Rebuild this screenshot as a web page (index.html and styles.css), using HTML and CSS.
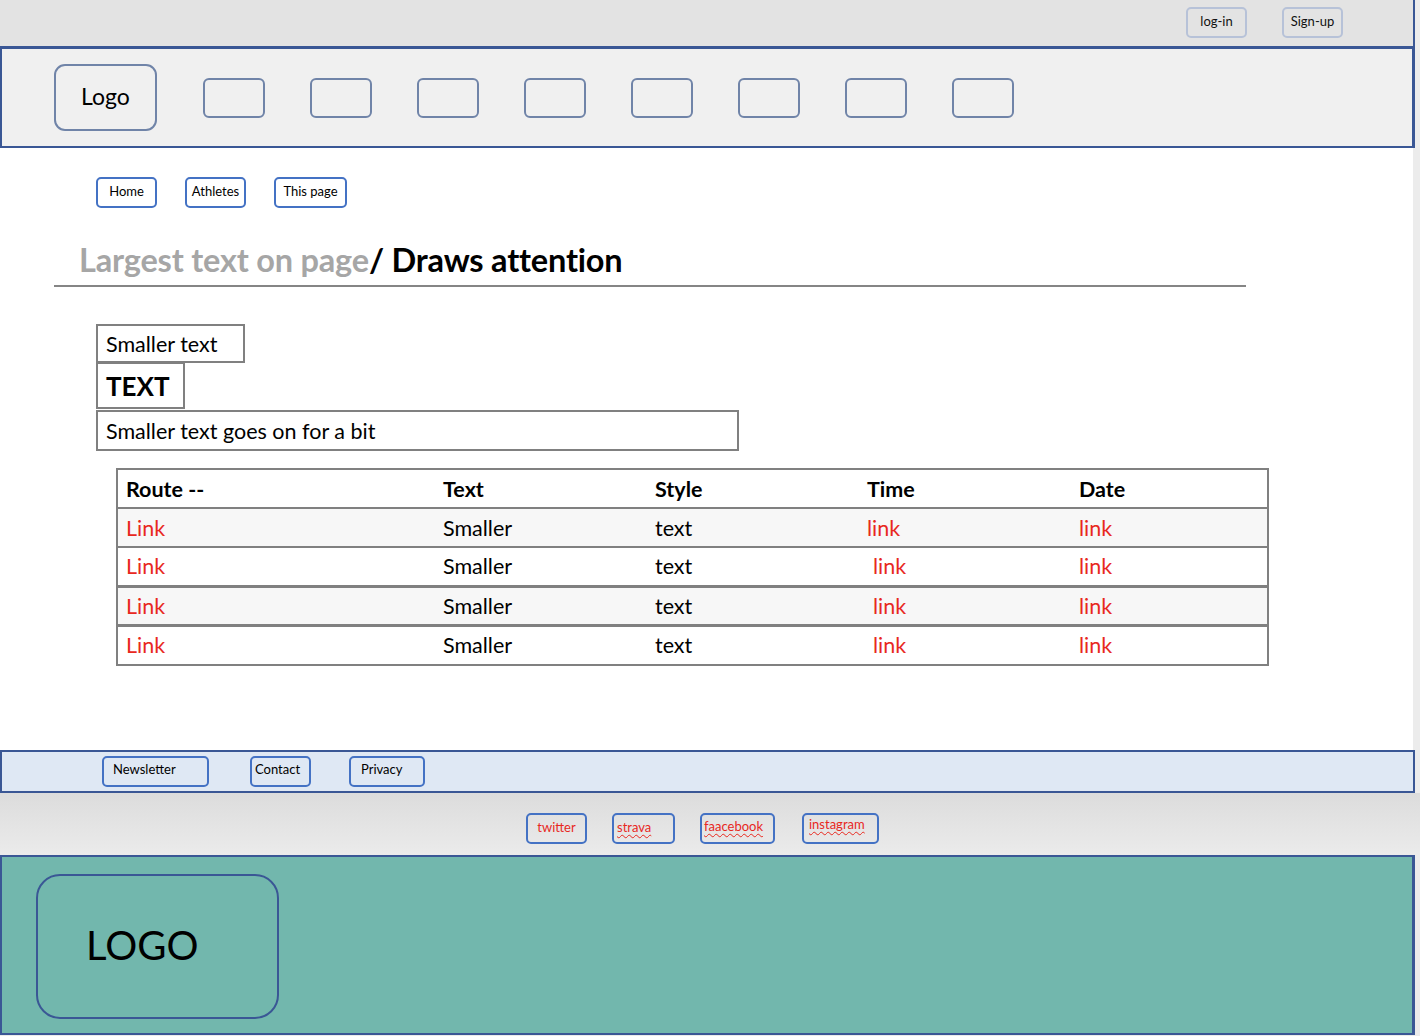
FILE: index.html
```html
<!DOCTYPE html>
<html lang="en">
<head>
<meta charset="utf-8">
<title>Wireframe</title>
<link rel="stylesheet" href="styles.css">
</head>
<body>
<div class="page">
  <header class="topbar">
    <a class="top-btn login">log-in</a>
    <a class="top-btn signup">Sign-up</a>
  </header>
  <nav class="navbar">
    <div class="logo">Logo</div>
    <div class="nav-items">
      <span class="nav-box"></span>
      <span class="nav-box"></span>
      <span class="nav-box"></span>
      <span class="nav-box"></span>
      <span class="nav-box"></span>
      <span class="nav-box"></span>
      <span class="nav-box"></span>
      <span class="nav-box"></span>
    </div>
  </nav>
  <main class="main">
    <div class="crumbs">
      <a class="crumb crumb-home">Home</a>
      <a class="crumb crumb-ath">Athletes</a>
      <a class="crumb crumb-this">This page</a>
    </div>
    <h1 class="title"><span class="title-muted">Largest text on page</span>/ Draws attention</h1>
    <div class="boxes">
      <div class="box box-small">Smaller text</div>
      <div class="box box-big">TEXT</div>
      <div class="box box-long">Smaller text goes on for a bit</div>
    </div>
    <table class="routes">
      <colgroup>
        <col class="c1"><col class="c2"><col class="c3"><col class="c4"><col class="c5">
      </colgroup>
      <thead>
        <tr><th>Route --</th><th>Text</th><th>Style</th><th>Time</th><th>Date</th></tr>
      </thead>
      <tbody>
        <tr class="shade"><td class="red">Link</td><td>Smaller</td><td>text</td><td class="red">link</td><td class="red">link</td></tr>
        <tr class="thick"><td class="red">Link</td><td>Smaller</td><td>text</td><td class="red shift">link</td><td class="red">link</td></tr>
        <tr class="shade thick"><td class="red">Link</td><td>Smaller</td><td>text</td><td class="red shift">link</td><td class="red">link</td></tr>
        <tr><td class="red">Link</td><td>Smaller</td><td>text</td><td class="red shift">link</td><td class="red">link</td></tr>
      </tbody>
    </table>
  </main>
  <footer class="footbar">
    <a class="foot-btn fb-news">Newsletter</a>
    <a class="foot-btn fb-contact">Contact</a>
    <a class="foot-btn fb-privacy">Privacy</a>
  </footer>
</div>
<div class="social">
  <a class="soc soc-tw">twitter</a>
  <a class="soc soc-st"><span class="wavy">strava</span></a>
  <a class="soc soc-fb"><span class="wavy">faacebook</span></a>
  <a class="soc soc-ig"><span class="wavy">instagram</span></a>
</div>
<div class="page">
  <section class="bottom">
    <div class="big-logo">LOGO</div>
  </section>
</div>
</body>
</html>
```

FILE: styles.css
```css
* { box-sizing: border-box; }

html, body {
  margin: 0;
  padding: 0;
}

body {
  font-family: Lato, "Open Sans", "Liberation Sans", sans-serif;
  color: #000;
  background: linear-gradient(to bottom, #ececec 0, #ececec 793px, #dcdcdc 793px, #ebebeb 855px, #ebebeb 100%);
  width: 1420px;
  height: 1036px;
  overflow: hidden;
}

.page {
  width: 1415px;
}

/* top bar */
.topbar {
  height: 49px;
  background: #e3e3e3;
  border-bottom: 3px solid #3a5795;
  border-right: 2px solid #3a5795;
  display: flex;
  align-items: flex-start;
  padding: 7px 0 0 1186px;
  gap: 35px;
}

.top-btn {
  display: flex;
  align-items: center;
  justify-content: center;
  width: 61px;
  height: 31px;
  border: 2px solid #b7c2d8;
  border-radius: 5px;
  font-size: 13px;
  padding-bottom: 3px;
  color: #111;
}

/* nav */
.navbar {
  height: 99px;
  background: #f0f0f0;
  border-left: 2px solid #3a5795;
  border-right: 3px solid #3a5795;
  border-bottom: 2px solid #3a5795;
  display: flex;
  align-items: center;
  padding-left: 52px;
  gap: 46px;
}

.logo {
  width: 103px;
  height: 67px;
  border: 2px solid #7084a8;
  border-radius: 11px;
  display: flex;
  align-items: center;
  justify-content: center;
  font-size: 23px;
  padding-bottom: 3px;
}

.nav-items {
  display: flex;
  gap: 45px;
}

.nav-box {
  width: 62px;
  height: 40px;
  border: 2px solid #7084a8;
  border-radius: 6px;
}

/* main */
.main {
  background: #fff;
  height: 602px;
  padding-top: 29px;
  margin-right: 2px;
}

.crumbs {
  display: flex;
  gap: 28px;
  padding-left: 96px;
}

.crumb {
  height: 31px;
  border: 2px solid #4472c4;
  border-radius: 5px;
  font-size: 13px;
  text-align: center;
  padding-top: 4px;
}

.crumb-home { width: 61px; }
.crumb-ath { width: 61px; }
.crumb-this { width: 73px; }

.title {
  margin: 32px 0 0 54px;
  width: 1192px;
  border-bottom: 2px solid #858585;
  padding: 0 0 5px 25px;
  font-size: 32.5px;
  font-weight: 700;
  line-height: 40px;
  letter-spacing: -0.2px;
}

.title-muted {
  color: #a6a6a6;
}

.boxes {
  margin: 37px 0 0 96px;
  display: flex;
  flex-direction: column;
  align-items: flex-start;
}

.box {
  border: 2px solid #808080;
  padding-left: 8px;
  display: flex;
  align-items: center;
}

.box-small {
  width: 149px;
  height: 39px;
  font-size: 21.5px;
}

.box-big {
  width: 89px;
  height: 47px;
  margin-top: -1px;
  font-size: 26px;
  font-weight: 700;
}

.box-long {
  width: 643px;
  height: 41px;
  margin-top: 1px;
  font-size: 21.5px;
}

/* table */
.routes {
  margin: 17px 0 0 116px;
  width: 1151px;
  border-collapse: collapse;
  border: 2px solid #808080;
  font-size: 21.5px;
  table-layout: fixed;
}

.c1 { width: 318px; }
.c2 { width: 212px; }
.c3 { width: 212px; }
.c4 { width: 212px; }
.c5 { width: 197px; }

.routes th,
.routes td {
  text-align: left;
  padding: 0 0 0 8px;
  height: 39px;
  border-bottom: 2px solid #808080;
}

.routes th {
  font-weight: 700;
  height: 39px;
}

.routes tr.shade td {
  background: #f7f7f7;
}

.routes tr.thick td {
  border-bottom: 3px solid #808080;
}

.routes tbody tr:last-child td {
  border-bottom: 0;
  height: 40px;
}

.red {
  color: #e8281e;
}

.shift {
  padding-left: 14px !important;
}

/* footer bar */
.footbar {
  height: 43px;
  background: #dfe8f4;
  border: 2px solid #3a5795;
  display: flex;
  align-items: center;
  padding-left: 100px;
}

.foot-btn {
  height: 31px;
  border: 2px solid #4472c4;
  border-radius: 5px;
  font-size: 13px;
  padding-top: 3px;
}

.fb-news { width: 107px; padding-left: 9px; }
.fb-contact { width: 61px; padding-left: 3px; margin-left: 41px; }
.fb-privacy { width: 76px; padding-left: 10px; margin-left: 38px; }

/* social */
.social {
  height: 62px;
  display: flex;
  align-items: flex-start;
  padding: 20px 0 0 526px;
}

.soc {
  height: 31px;
  border: 2px solid #4472c4;
  border-radius: 5px;
  font-size: 13px;
  color: #e8281e;
  padding-top: 3px;
}

.wavy {
  text-decoration: underline wavy #e8281e;
  text-decoration-thickness: 1px;
  text-underline-offset: 2px;
}

.soc-tw { width: 61px; text-align: center; padding-top: 4px; }
.soc-st { width: 63px; padding-left: 3px; margin-left: 25px; padding-top: 4px; }
.soc-fb { width: 75px; padding-left: 2px; margin-left: 25px; }
.soc-ig { width: 77px; padding-left: 5px; margin-left: 27px; padding-top: 1px; }

/* bottom */
.bottom {
  height: 180px;
  background: #72b7ad;
  border: 2px solid #3a5795;
  border-right-width: 3px;
  padding: 17px 0 0 34px;
}

.big-logo {
  width: 243px;
  height: 145px;
  border: 2px solid #3a5795;
  border-radius: 24px;
  display: flex;
  align-items: center;
  padding-left: 48px;
  font-size: 40px;
  padding-bottom: 4px;
}
```
